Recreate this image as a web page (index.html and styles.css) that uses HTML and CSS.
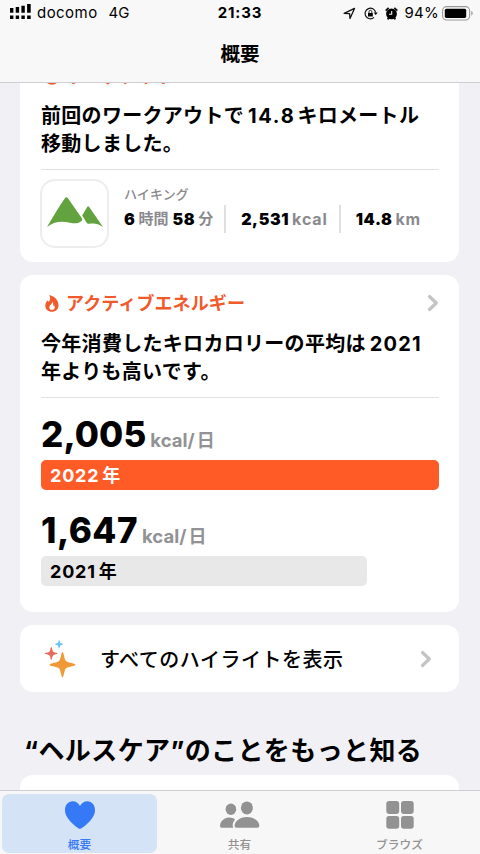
FILE: index.html
```html
<!DOCTYPE html>
<html lang="ja">
<head>
<meta charset="utf-8">
<title>概要</title>
<link rel="stylesheet" href="styles.css">
</head>
<body>
<div class="phone">
  <header class="top">
    <div class="status">
      <div class="status-left">
        <svg class="signal" width="22" height="16" viewBox="0 0 22 16"><path d="M0 4h3.4v4.7H0zM5.7 3h3.4v5.7H5.7zM11.4 1.8h3.4v6.9h-3.4zM17.1 0h3.6v8.7h-3.6zM0 11.5h3.4V15H0zM5.7 11.5h3.4V15H5.7zM11.4 11.5h3.4V15h-3.4zM17.1 11.5h3.6V15h-3.6z"/></svg>
        <span class="carrier">docomo</span>
        <span class="network">4G</span>
      </div>
      <div class="clock">21:33</div>
      <div class="status-right">
        <svg class="loc" width="13" height="13" viewBox="0 0 13 13"><path d="M1.2 6.4 11.5 1.4 7 11.5 6.6 6.6z" fill="none" stroke="#111" stroke-width="1.3" stroke-linejoin="round"/></svg>
        <svg class="lock" width="14" height="13" viewBox="0 0 14 13"><path d="M11.6 5.4A5.3 5.3 0 1 0 10 10.4" fill="none" stroke="#111" stroke-width="1.2"/><path d="M9.7 5.5h4L11.7 8z"/><path d="M4 6h4.8v3.5H4z"/><path d="M5 6V4.7a1.4 1.4 0 0 1 2.8 0V6" fill="none" stroke="#111" stroke-width=".9"/></svg>
        <svg class="alarm" width="13" height="13" viewBox="0 0 13 13"><circle cx="6.5" cy="6.9" r="5.4"/><path d="M.7 3.6 3.7.8M12.3 3.6 9.3.8M2.6 12.4l1.3-1.7M10.4 12.4 9.1 10.7" stroke="#111" stroke-width="1.8"/><path d="M6.7 4v3.2H4" fill="none" stroke="#f8f8f8" stroke-width="1.1"/></svg>
        <span class="percent">94%</span>
        <svg class="battery" width="32" height="15" viewBox="0 0 32 15"><rect x=".6" y=".6" width="27" height="13.4" rx="4" fill="none" stroke="#999" stroke-width="1.1"/><rect x="2.8" y="2.7" width="21.4" height="9.2" rx="1.6"/><path d="M29.3 5v4.6c1.9-.6 1.9-4 0-4.6z" fill="#999"/></svg>
      </div>
    </div>
    <h1 class="page-title">概要</h1>
  </header>

  <main class="content">
    <section class="card workout">
      <div class="category">
        <svg class="flame" width="14" height="17" viewBox="0 0 14 17"><path fill-rule="evenodd" d="M4.2 0C8.6.8 13.5 4.6 13.5 10.2c0 4-2.7 6.5-6.6 6.5S.3 14.100.3 10.700C.3 8.700 1.200 6.600 2.700 5.400c.4.6.7 1 1.300 1.300C5.600 4.600 5.400 2.100 4.200 0zM7.300 6.800c0 2.400-3 3.500-3 5.700 0 1.500 1.200 2.500 2.700 2.500s2.800-1.100 2.800-2.700c0-.8-.3-1.500-.7-2-.2.500-.5.8-.9.9.3-1.600.1-3.300-.9-4.400z"/></svg>
        <span>ワークアウト</span>
      </div>
      <p class="headline">前回のワークアウトで<span class="num distance-num">14.8</span>キロメートル<br>移動しました。</p>
      <div class="detail">
        <div class="app-icon">
          <svg width="56" height="30" viewBox="0 0 56 30"><path fill="#62a33f" d="M0 30C6 20 13 8 18.500.5 20-.3 20.500.5 21.500 2L35 21.500c.6 1 .2 2-1.200 2.900-2.300 1.700-5.800 2.600-10.800 1.300C14.500 23.600 6.500 24.500 0 30zM35.200 18.600 40.200 10c.6-.9 1.400-.9 2 0L56 30c-4.800-3.400-8.500-4-13.800-3.200-1.500.1-2.200-.6-2.700-1.400z"/></svg>
        </div>
        <div class="activity">
          <div class="activity-name">ハイキング</div>
          <div class="stats">
            <div class="stat time"><b>6</b><span class="ja">時間</span><b class="mins">58</b><span class="ja">分</span></div>
            <div class="stat energy"><b>2,531</b><span>kcal</span></div>
            <div class="stat distance"><b>14.8</b><span>km</span></div>
          </div>
        </div>
      </div>
    </section>

    <section class="card energy-card">
      <div class="category">
        <svg class="flame" width="14" height="17" viewBox="0 0 14 17"><path fill-rule="evenodd" d="M4.2 0C8.6.8 13.5 4.6 13.5 10.2c0 4-2.7 6.5-6.6 6.5S.3 14.100.3 10.700C.3 8.700 1.200 6.600 2.700 5.400c.4.6.7 1 1.300 1.300C5.600 4.600 5.400 2.100 4.200 0zM7.300 6.800c0 2.400-3 3.500-3 5.700 0 1.500 1.200 2.500 2.700 2.500s2.800-1.100 2.800-2.700c0-.8-.3-1.500-.7-2-.2.500-.5.8-.9.9.3-1.600.1-3.300-.9-4.400z"/></svg>
        <span>アクティブエネルギー</span>
        <svg class="chevron" width="12" height="18" viewBox="0 0 12 18"><path d="M2.500 2.500 9.300 9l-6.800 6.500"/></svg>
      </div>
      <p class="headline">今年消費したキロカロリーの平均は<span class="num">2021</span><br>年よりも高いです。</p>
      <div class="years">
        <div class="reading"><b>2,005</b><span>kcal/</span><span class="day">日</span></div>
        <div class="bar current">2022<span>年</span></div>
        <div class="reading second"><b>1,647</b><span>kcal/</span><span class="day">日</span></div>
        <div class="bar previous">2021<span>年</span></div>
      </div>
    </section>

    <section class="card all">
      <svg width="34" height="38" viewBox="0 0 34 38"><path fill="#f09a37" d="M18.500 12c1.400 0 1.600 7.700 3.800 9.300C24.400 22.900 31.500 23.300 31.500 24.700c0 1.400-7.100 1.800-9.200 3.400-2.200 1.600-2.400 9.400-3.800 9.400s-1.600-7.800-3.800-9.400C12.600 26.500 5.500 26.100 5.500 24.700c0-1.400 7.100-1.800 9.200-3.400 2.200-1.600 2.400-9.300 3.800-9.300z"/><path fill="#e76a5f" d="M7.300 7c.9 0 .8 3.800 2 4.700.8.900 4.300 1 4.300 1.700s-3.500.8-4.300 1.800c-1.200.8-1.100 4.600-2 4.600s-.8-3.800-2-4.600c-.8-1-4.300-1.100-4.300-1.800s3.500-.8 4.300-1.700C6.500 10.800 6.400 7 7.300 7z"/><path fill="#6cc3f5" d="M15.100 0c.7 0 .6 2.400 1.300 3 .5.500 2.800.6 2.800 1.200s-2.300.7-2.800 1.200c-.7.6-.6 2.900-1.300 2.900s-.6-2.300-1.300-2.900c-.5-.5-2.800-.6-2.800-1.200s2.300-.7 2.800-1.200c.7-.6.6-3 1.300-3z"/></svg>
      <span class="all-label">すべてのハイライトを表示</span>
      <svg class="chevron" width="12" height="18" viewBox="0 0 12 18"><path d="M2.500 2.500 9.300 9l-6.800 6.500"/></svg>
    </section>

    <h2 class="learn">“ヘルスケア”のことをもっと知る</h2>
    <section class="card article"></section>
  </main>

  <nav class="tabs">
    <div class="tab active">
      <svg width="32" height="28" viewBox="0 0 32 28"><path d="M16 28C14.600 28 1 18.500 1 9.300 1 4 4.300.3 8.600.3c3.300 0 5.800 1.700 7.400 4.700C17.600 2 20.100.3 23.400.3 27.700.3 31 4 31 9.300 31 18.500 17.400 28 16 28z"/></svg>
      <span>概要</span>
    </div>
    <div class="tab">
      <svg width="42" height="28" viewBox="0 0 42 28"><ellipse cx="11.900" cy="8.200" rx="5.300" ry="5.700"/><path d="M16 18.500C13.500 16.400 9 15.800 5.500 17.700 2.500 19.300 1 22 1 24.500c0 1.400.7 2.300 2 2.300h11.200c-1.200-2.700-.3-6 1.800-8.300z"/><ellipse cx="27.900" cy="6.900" rx="6" ry="6.500"/><path d="M28 16c7.800 0 12.300 4.900 12.300 8.600 0 1.400-.8 2.200-2.100 2.200H17.600c-1.300 0-2-.8-2-2.200 0-3.700 4.600-8.600 12.400-8.600z"/></svg>
      <span>共有</span>
    </div>
    <div class="tab">
      <svg width="28" height="28" viewBox="0 0 28 28"><rect x=".3" y="0" width="12.900" height="12.900" rx="2.800"/><rect x="15" y="0" width="12.700" height="12.900" rx="2.800"/><rect x=".3" y="14.900" width="12.900" height="12.900" rx="2.800"/><rect x="15" y="14.900" width="12.700" height="12.900" rx="2.800"/></svg>
      <span>ブラウズ</span>
    </div>
  </nav>
</div>
</body>
</html>
```

FILE: styles.css
```css
* { box-sizing: border-box; }
body {
  margin: 0;
  font-family: Inter, "Noto Sans CJK JP", sans-serif;
  color: #000;
  background: #f1f0f5;
}
h1, h2, p { margin: 0; }
svg { display: block; flex: none; }
.phone {
  width: 480px;
  height: 854px;
  display: flex;
  flex-direction: column;
  overflow: hidden;
}

/* Status bar and title */
.top {
  flex: none;
  height: 83px;
  background: #f8f8f8;
  border-bottom: 1px solid #cfced0;
}
.status {
  height: 26px;
  display: grid;
  grid-template-columns: 1fr auto 1fr;
  align-items: center;
  line-height: 26px;
  font-size: 15px;
}
.status-left, .status-right { display: flex; align-items: center; }
.status-left { padding-left: 10px; }
.status-right { justify-content: flex-end; padding-right: 6px; }
.signal { margin-top: -2px; }
.carrier { margin-left: 5px; letter-spacing: .45px; }
.network { margin-left: 11px; }
.clock { font-weight: 700; letter-spacing: .8px; }
.lock { margin-left: 8px; }
.alarm { margin-left: 7px; }
.percent { margin-left: 6px; letter-spacing: .3px; }
.battery { margin-left: 3px; }
.page-title {
  height: 56px;
  line-height: 56px;
  text-align: center;
  font-size: 19.500px;
  font-weight: 700;
}

/* Cards */
.content { flex: 1; min-height: 0; overflow: hidden; padding: 0 21px 0 20px; }
.card { background: #fff; border-radius: 13px; margin-bottom: 13px; padding: 17px 20px 0 21px; }
.card.workout { height: 215px; margin-top: -36px; }
.category {
  height: 24px;
  display: flex;
  align-items: center;
  padding-left: 4px;
  color: #f15a2b;
  font-size: 18px;
  font-weight: 700;
  line-height: 24px;
}
.workout .category { height: 25px; padding-top: 1px; }
.category span { margin-left: 7px; letter-spacing: .1px; }
.energy-card .flame, .energy-card .category .chevron { margin-top: -2px; }
.workout .flame { margin-top: -2px; }
.flame { fill: #f15a2b; }
.chevron { margin-left: auto; fill: none; stroke: #c4c4c6; stroke-width: 3.2; stroke-linecap: round; stroke-linejoin: round; }
.headline {
  margin-top: 14px;
  padding-bottom: 11px;
  border-bottom: 1px solid #e1e1e3;
  font-size: 20px;
  font-weight: 700;
  line-height: 28px;
  letter-spacing: .3px;
  white-space: nowrap;
}
.workout .headline { margin-top: 13px; }
.num { margin: 0 3px 0 4px; letter-spacing: 1.2px; }
.distance-num { letter-spacing: 1.7px; margin-right: 2px; }
.detail { display: flex; margin: 9px 0 0 -1px; }
.app-icon {
  width: 69px;
  height: 69px;
  display: flex;
  align-items: center;
  justify-content: center;
  padding-bottom: 3px;
  border: 2px solid #ededee;
  border-radius: 15px;
}
.activity { margin-left: 15px; padding-top: 5px; }
.activity-name { height: 20px; line-height: 20px; font-size: 13px; font-weight: 500; letter-spacing: .1px; color: #8a8a8e; }
.stats { display: flex; align-items: center; height: 30px; font-size: 16px; }
.stat { display: flex; height: 28px; line-height: 28px; font-weight: 700; white-space: nowrap; }
.stat b { letter-spacing: .6px; }
.stat span { color: #8a8a8e; margin-left: 3px; letter-spacing: .9px; }
.stat .ja { font-size: 15px; letter-spacing: 0; }
.stat .mins { margin-left: 4px; }
.stat + .stat { border-left: 2px solid #e0e0e2; padding-left: 15px; margin-left: 11px; }

/* Yearly averages */
.years { height: 214px; padding-top: 14px; }
.reading { height: 48px; display: flex; align-items: baseline; line-height: 45px; }
.reading b { font-size: 35px; font-weight: 800; letter-spacing: .1px; }
.reading span { font-size: 18.500px; font-weight: 700; color: #929295; margin-left: 4px; }
.reading .day { font-size: 18px; margin-left: 2px; }
.reading.second { margin-top: 18px; }
.reading.second b { letter-spacing: .5px; }
.bar { height: 30px; line-height: 31px; padding-left: 9px; border-radius: 5px; font-size: 18px; font-weight: 700; letter-spacing: .8px; }
.bar span { margin-left: 3px; }
.current { background: #ff5b26; color: #fff; }
.previous { width: 326px; background: #e8e8e8; }

.all { height: 67px; display: flex; align-items: center; padding: 0 27px 0 24px; }
.all-label { margin-left: 22px; font-size: 20px; font-weight: 500; letter-spacing: .5px; }
.learn {
  height: 70px;
  line-height: 91px;
  padding-left: 4px;
  font-size: 26px;
  font-weight: 700;
  letter-spacing: .4px;
  white-space: nowrap;
}
.article { height: 100px; }

/* Tab bar */
.tabs {
  flex: none;
  height: 64px;
  display: grid;
  grid-template-columns: repeat(3, 1fr);
  border-top: 1px solid #cfced2;
  background: #f7f7f7;
}
.tab {
  display: flex;
  flex-direction: column;
  align-items: center;
  margin: 3px 3px 3px 2px;
  padding-top: 7px;
  border-radius: 7px;
  color: #929292;
  font-size: 11.700px;
  font-weight: 500;
}
.tab svg { fill: currentColor; }
.tab span { line-height: 16px; margin-top: 8px; }
.tab.active { background: #d5e3f6; color: #3579f6; }
```
